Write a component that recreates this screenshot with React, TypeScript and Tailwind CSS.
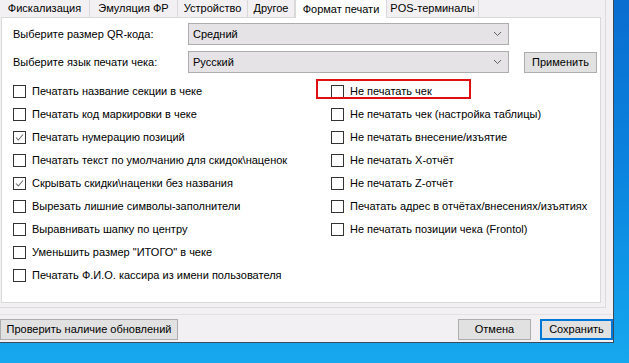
import type { ReactNode } from "react";

const tabs = [
  { label: "Фискализация", w: 90 },
  { label: "Эмуляция ФР", w: 88 },
  { label: "Устройство", w: 70 },
  { label: "Другое", w: 47 },
  { label: "Формат печати", w: 92, active: true },
  { label: "POS-терминалы", w: 92 },
];

const leftItems = [
  { label: "Печатать название секции в чеке" },
  { label: "Печатать код маркировки в чеке" },
  { label: "Печатать нумерацию позиций", checked: true },
  { label: "Печатать текст по умолчанию для скидок\\наценок" },
  { label: "Скрывать скидки\\наценки без названия", checked: true },
  { label: "Вырезать лишние символы-заполнители" },
  { label: "Выравнивать шапку по центру" },
  { label: 'Уменьшить размер "ИТОГО" в чеке' },
  { label: "Печатать Ф.И.О. кассира из имени пользователя" },
];

const rightItems = [
  { label: "Не печатать чек", marked: true },
  { label: "Не печатать чек (настройка таблицы)" },
  { label: "Не печатать внесение/изъятие" },
  { label: "Не печатать X-отчёт" },
  { label: "Не печатать Z-отчёт" },
  { label: "Печатать адрес в отчётах/внесениях/изъятиях" },
  { label: "Не печатать позиции чека (Frontol)" },
];

const Check = ({ label, checked, marked }: { label: string; checked?: boolean; marked?: boolean }) => (
  <div className="relative flex h-[23px] items-center gap-[6px]">
    {marked && (
      <div className="absolute left-[-15px] top-[-1px] h-[20px] w-[155px] border-2 border-[#e01010]" />
    )}
    <div className="flex h-[13px] w-[13px] shrink-0 items-center justify-center border border-[#333333] bg-white">
      {checked && (
        <svg width="11" height="11" viewBox="0 0 11 11">
          <path d="M2 5.5 L4.3 8 L9 2.5" fill="none" stroke="#6b6b6b" strokeWidth="1.1" />
        </svg>
      )}
    </div>
    <span className="whitespace-nowrap">{label}</span>
  </div>
);

const Select = ({ value }: { value: string }) => (
  <div className="flex h-[22px] w-[321px] items-center justify-between border border-[#adadad] bg-[#e5e3e5] pl-[4px] pr-[6px]">
    <span>{value}</span>
    <svg width="9" height="6" viewBox="0 0 9 6">
      <path d="M1 1 L4.5 4.5 L8 1" fill="none" stroke="#606060" strokeWidth="1" />
    </svg>
  </div>
);

const Button = ({ children, w, primary }: { children: ReactNode; w: string; primary?: boolean }) => (
  <div
    className={`flex h-[21px] items-center justify-center bg-[#e1e1e1] ${w} ${
      primary ? "border-2 border-[#0078d7]" : "border border-[#adadad]"
    }`}
  >
    {children}
  </div>
);

export default function App() {
  return (
    <div
      className="h-[363px] w-[629px] overflow-hidden bg-gradient-to-b from-[#0a6dd0] via-[#0b86e0] to-[#16a8ee] text-[11px] text-black"
      style={{ fontFamily: '"Liberation Sans", Arial, sans-serif' }}
    >
      <div className="flex h-[343px] w-[614px] flex-col border-b border-r border-[#3c4a5a] bg-[#f3f0f3]">
        <div className="flex h-[308px] w-[606px] flex-col border-b border-r border-[#dcdadc]">
          <div className="flex h-[17px] items-end">
            {tabs.map((t) => (
              <div
                key={t.label}
                style={{ width: t.w }}
                className={
                  t.active
                    ? "relative z-10 -mb-px flex h-[18px] items-start justify-center border-x border-[#d9d9d9] bg-white pt-[1px]"
                    : "flex h-[17px] items-center justify-center border-r border-[#d9d9d9] bg-[#f3f0f3]"
                }
              >
                <span className="whitespace-nowrap">{t.label}</span>
              </div>
            ))}
          </div>
          <div className="mb-[4px] ml-[1px] mr-[4px] flex flex-1 flex-col border border-[#d9d9d9] bg-white pl-[11px]">
            <div className="mt-[5px] flex items-center">
              <span className="w-[175px]">Выберите размер QR-кода:</span>
              <Select value="Средний" />
            </div>
            <div className="mt-[6px] flex items-center">
              <span className="w-[175px]">Выберите язык печати чека:</span>
              <Select value="Русский" />
              <div className="ml-[15px]">
                <Button w="w-[73px]">Применить</Button>
              </div>
            </div>
            <div className="mt-[7px] flex">
              <div className="flex w-[318px] flex-col">
                {leftItems.map((i) => (
                  <Check key={i.label} {...i} />
                ))}
              </div>
              <div className="flex flex-col">
                {rightItems.map((i) => (
                  <Check key={i.label} {...i} />
                ))}
              </div>
            </div>
          </div>
        </div>
        <div className="mt-[6px] flex flex-1 items-start border-t border-[#e4e1e4] pt-[4px]">
          <Button w="w-[178px]">Проверить наличие обновлений</Button>
          <div className="ml-auto flex gap-[9px]">
            <Button w="w-[73px]">Отмена</Button>
            <Button w="w-[73px]" primary>
              Сохранить
            </Button>
          </div>
        </div>
      </div>
    </div>
  );
}
